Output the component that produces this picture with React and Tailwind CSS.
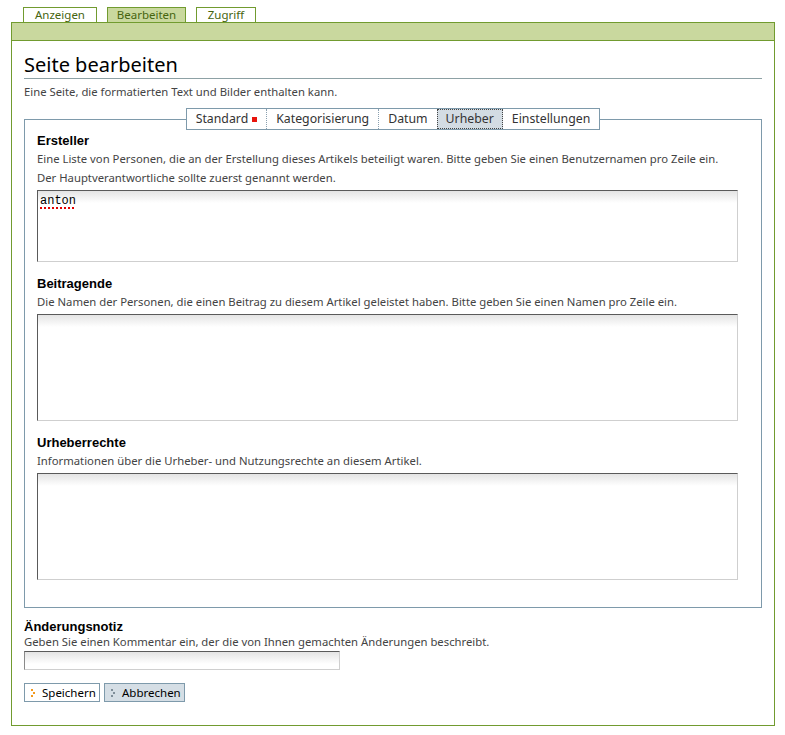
import React from "react";

const font = { fontFamily: '"Noto Sans", "Open Sans", sans-serif' };
const boldFont = { fontFamily: '"Liberation Sans", Arial, sans-serif' };

function ArrowDots({ color }) {
  return (
    <svg width="6" height="8" viewBox="0 0 6 8" className="shrink-0">
      <rect x="0" y="0" width="2" height="2" fill={color} />
      <rect x="2" y="3" width="2" height="2" fill={color} />
      <rect x="0" y="6" width="2" height="2" fill={color} />
    </svg>
  );
}

function Field({ label, lines, height, children }) {
  return (
    <div>
      <div className="text-[13px] leading-4 font-bold text-black" style={boldFont}>
        {label}
      </div>
      {lines.map((l, i) => (
        <div key={i} className="text-[11.3px] leading-[19px] text-[#444]">
          {l}
        </div>
      ))}
      <div
        className="mt-[3px] w-[701px] border border-t-[#5a5a5a] border-l-[#5a5a5a] border-r-[#cfcfcf] border-b-[#cfcfcf] bg-[linear-gradient(to_bottom,#e4e4e4,#ffffff_12px)] px-[2px] pt-[2px] text-[12px] leading-[14px]"
        style={{ height }}
      >
        {children}
      </div>
    </div>
  );
}

export default function App() {
  const tabs = ["Standard", "Kategorisierung", "Datum", "Urheber", "Einstellungen"];
  return (
    <div className="w-[785px] min-h-[735px] bg-white pt-[7px]" style={font}>
      {/* top tabs */}
      <div className="flex gap-[10px] pl-[23px]">
        <div className="w-[74px] h-[15px] border border-b-0 border-[#719b2f] text-center text-[11.5px] leading-[14px] text-[#46650f]">
          Anzeigen
        </div>
        <div className="w-[79px] h-[15px] border border-b-0 border-[#719b2f] bg-[#c9d89e] text-center text-[11.5px] leading-[14px] text-[#46650f]">
          Bearbeiten
        </div>
        <div className="w-[60px] h-[15px] border border-b-0 border-[#719b2f] text-center text-[11.5px] leading-[14px] text-[#46650f]">
          Zugriff
        </div>
      </div>

      <div className="ml-[11px] w-[764px] border border-[#719b2f]">
        <div className="h-[18px] bg-[#c9d89e] border-b border-[#719b2f]" />

        <div className="px-[12px] pb-[23px]">
          <h1 className="mt-[12px] text-[20px] leading-6 text-black border-b border-[#8da1a5] pb-[1px]">
            Seite bearbeiten
          </h1>
          <p className="mt-[6px] text-[11.3px] leading-[14px] text-[#444]">
            Eine Seite, die formatierten Text und Bilder enthalten kann.
          </p>

          <fieldset className="mt-[9px] border border-[#7e9aab] px-[12px] pb-[27px]">
            <legend className="mx-auto flex border border-[#7e9aab] bg-white text-[12.3px] leading-[20px] text-[#333]">
              {tabs.map((t, i) => (
                <div
                  key={t}
                  className={
                    "flex items-center px-[9px] " +
                    (i > 0 && t !== "Urheber" && tabs[i - 1] !== "Urheber"
                      ? "border-l border-dotted border-[#8aa0b0] "
                      : "") +
                    (t === "Urheber"
                      ? "bg-[#d3dce3] outline outline-1 outline-dotted outline-[#444] -outline-offset-1"
                      : "")
                  }
                >
                  {t}
                  {t === "Standard" && (
                    <span className="ml-[4px] inline-block w-[5px] h-[5px] bg-[#e8140c]" />
                  )}
                </div>
              ))}
            </legend>

            <div className="mt-[3px] flex flex-col gap-[14px]">
              <Field
                label="Ersteller"
                lines={[
                  "Eine Liste von Personen, die an der Erstellung dieses Artikels beteiligt waren. Bitte geben Sie einen Benutzernamen pro Zeile ein.",
                  "Der Hauptverantwortliche sollte zuerst genannt werden.",
                ]}
                height={72}
              >
                <span
                  className="text-[12px] leading-[14px] text-black underline decoration-dotted decoration-[#e00000] decoration-2 underline-offset-[3px]"
                  style={{ fontFamily: '"Liberation Mono", monospace' }}
                >
                  anton
                </span>
              </Field>
              <Field
                label="Beitragende"
                lines={[
                  "Die Namen der Personen, die einen Beitrag zu diesem Artikel geleistet haben. Bitte geben Sie einen Namen pro Zeile ein.",
                ]}
                height={107}
              />
              <Field
                label="Urheberrechte"
                lines={[
                  "Informationen über die Urheber- und Nutzungsrechte an diesem Artikel.",
                ]}
                height={107}
              />
            </div>
          </fieldset>

          <div className="mt-[11px] text-[13px] leading-4 font-bold text-black" style={boldFont}>
            Änderungsnotiz
          </div>
          <div className="text-[11.3px] leading-[14px] text-[#444]">
            Geben Sie einen Kommentar ein, der die von Ihnen gemachten Änderungen beschreibt.
          </div>
          <div className="mt-[2px] w-[316px] h-[19px] border border-t-[#5a5a5a] border-l-[#8a8a8a] border-r-[#cfcfcf] border-b-[#cfcfcf] bg-[linear-gradient(to_bottom,#e4e4e4,#ffffff_12px)]" />

          <div className="mt-[13px] flex gap-[4px]">
            <button className="flex h-[19px] w-[76px] items-center gap-[5px] border border-[#7e9aab] bg-white pl-[6px] text-[11.5px] text-black">
              <ArrowDots color="#f39a1e" />
              Speichern
            </button>
            <button className="flex h-[19px] w-[81px] items-center gap-[5px] border border-[#7e9aab] bg-[#d5dee5] pl-[6px] text-[11.5px] text-black">
              <ArrowDots color="#7f8e99" />
              Abbrechen
            </button>
          </div>
        </div>
      </div>
    </div>
  );
}
